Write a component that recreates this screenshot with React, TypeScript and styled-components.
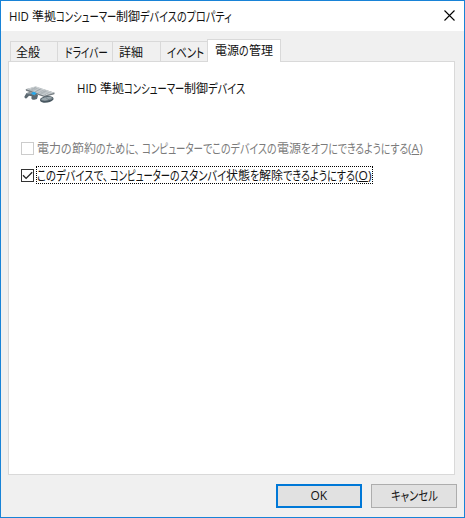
import React, { useLayoutEffect, useRef, useState } from "react";
import styled, { createGlobalStyle, css } from "styled-components";

const GlobalStyle = createGlobalStyle`
  * { box-sizing: border-box; }
  body { margin: 0; background: #f0f0f0; }
`;

const Window = styled.div`
  width: 465px;
  height: 518px;
  display: flex;
  flex-direction: column;
  border: 1px solid #1883d7;
  background: #f0f0f0;
  color: #111;
  font: 12px/16px "Noto Sans CJK JP", sans-serif;
  overflow: hidden;
`;

const TitleBar = styled.header`
  display: flex;
  align-items: flex-start;
  justify-content: space-between;
  height: 30px;
  flex: none;
  padding: 7px 9px 0 8px;
  background: #fff;
`;

const CloseButton = styled.button`
  display: flex;
  padding: 0;
  margin-top: 2px;
  border: 0;
  background: none;
`;

const Tabs = styled.nav`
  display: flex;
  align-items: flex-end;
  height: 30px;
  flex: none;
  padding-left: 9px;
`;

const Tab = styled.div<{ $width: number; $selected?: boolean; $first?: boolean; $inset: number }>`
  width: ${(p) => p.$width}px;
  height: 20px;
  padding: 2px 0 0 ${(p) => p.$inset}px;
  border-top: 1px solid #d9d9d9;
  border-left: ${(p) => (p.$first ? "1px solid #d9d9d9" : "0")};
  border-right: 1px solid #d9d9d9;
  ${(p) =>
    p.$selected &&
    css`
      height: 23px;
      margin: 0 0 -1px -1px;
      border-left: 1px solid #d9d9d9;
      background: #fff;
      position: relative;
    `}
`;

const Page = styled.main`
  width: 447px;
  height: 414px;
  flex: none;
  margin: 0 0 0 7px;
  padding: 17px 12px;
  border: 1px solid #d9d9d9;
  background: #fff;
`;

const Device = styled.div`
  display: flex;
  height: 60px;
  padding-left: 3px;
  gap: 21px;
`;

const DeviceName = styled.div`
  padding-top: 1px;
`;

const Option = styled.label<{ $disabled?: boolean }>`
  display: flex;
  align-items: center;
  height: 18px;
  margin-bottom: 9px;
  gap: 2px;
  color: ${(p) => (p.$disabled ? "#7b7b7b" : "#111")};
`;

const Box = styled.span<{ $disabled?: boolean }>`
  display: flex;
  width: 13px;
  height: 13px;
  flex: none;
  border: 1px solid ${(p) => (p.$disabled ? "#ccc" : "#333")};
`;

const OptionText = styled.span<{ $focused?: boolean }>`
  height: 18px;
  padding: 0 1px 0 0;
  border: 1px dotted ${(p) => (p.$focused ? "#000" : "transparent")};
`;

const Footer = styled.footer`
  display: flex;
  justify-content: flex-end;
  gap: 9px;
  padding: 9px 7px 0 0;
`;

const Button = styled.button<{ $primary?: boolean }>`
  display: flex;
  align-items: center;
  justify-content: center;
  width: 86px;
  height: 24px;
  padding: 0 0 2px;
  border: ${(p) => (p.$primary ? "2px solid #0078d7" : "1px solid #adadad")};
  background: #e1e1e1;
  color: #111;
  font: inherit;
`;

const Line = styled.span`
  display: flex;
  height: 16px;
  white-space: pre;
`;

const Slot = styled.span<{ $width: number; $gap: number }>`
  display: block;
  flex: none;
  width: ${(p) => p.$width}px;
  height: 16px;
  margin-right: ${(p) => p.$gap}px;
`;

type Script = "latin" | "kana" | "kanji";

const Glyphs = styled.span<{ $script: Script }>`
  display: block;
  width: max-content;
  transform-origin: 0 50%;
  ${(p) =>
    p.$script === "kana" &&
    css`
      font-size: 13px;
      font-feature-settings: "palt" 1;
    `}
  ${(p) =>
    p.$script === "latin" &&
    css`
      padding-top: 1px;
      font-family: "Open Sans", sans-serif;
    `}
`;

const Mnemonic = styled.span`
  text-decoration: underline;
  text-underline-offset: 1px;
  text-decoration-thickness: 1px;
`;

type Segment = [text: string, width: number, gap?: number];

function scriptOf(text: string): Script {
  if (/^[\x00-\x7f]+$/.test(text)) return "latin";
  return /^[\u3001-\u30ff]+$/.test(text) ? "kana" : "kanji";
}

/* A stretch of text condensed to the given advance width. */
function Run({ text, width, gap = 0 }: { text: string; width: number; gap?: number }) {
  const ref = useRef<HTMLSpanElement>(null);
  const [scale, setScale] = useState(1);
  useLayoutEffect(() => {
    if (ref.current) setScale(width / ref.current.offsetWidth);
  }, [text, width]);
  const key = /^\((.)\)$/.exec(text);
  return (
    <Slot $width={width} $gap={gap}>
      <Glyphs ref={ref} $script={scriptOf(text)} style={{ transform: `scaleX(${scale})` }}>
        {key ? <>(<Mnemonic>{key[1]}</Mnemonic>)</> : text}
      </Glyphs>
    </Slot>
  );
}

function Text({ runs }: { runs: Segment[] }) {
  return (
    <Line>
      {runs.map(([text, width, gap], i) => (
        <Run key={i} text={text} width={width} gap={gap} />
      ))}
    </Line>
  );
}

const tabs: { runs: Segment[]; width: number; inset: number; selected?: boolean }[] = [
  { runs: [["全般", 24]], width: 48, inset: 5 },
  { runs: [["ドライバー", 43]], width: 55, inset: 7 },
  { runs: [["詳細", 24]], width: 48, inset: 6 },
  { runs: [["イベント", 37]], width: 47, inset: 6 },
  { runs: [["電源", 24], ["の", 10], ["管理", 24]], width: 74, inset: 7, selected: true },
];

const deviceName: Segment[] = [
  ["HID", 20, 3],
  ["準拠", 24],
  ["コンシューマー", 60],
  ["制御", 24],
  ["デバイス", 37],
];

function DeviceIcon() {
  return (
    <svg width="32" height="32" viewBox="27 24 96 96">
      <path d="M32 55 62 47 119 65 118 70 88 78 33 59Z" fill="#777e83" />
      <path d="M33 54 62 46 118 65 88 74Z" fill="#ced3d5" />
      <path d="M41 55 93 71M49 52 101 69M57 50 109 67M47 58 64 49M61 62 78 53M76 67 94 58" stroke="#939ba0" strokeWidth="1.5" fill="none" />
      <path d="M34 67Q43 62 50 65L66 70Q71 73 68 77L66 84 58 86Q51 88 49 82L50 76 42 74 35 82Q29 84 28 77Z" fill="#5c6971" />
      <path d="M36 68 49 68 61 72" stroke="#aab4ba" strokeWidth="2" fill="none" />
      <path d="M48 67 56 62 65 67 57 73Z" fill="#27a9ed" />
      <path d="M77 82Q90 73 106 76 118 79 115 86 106 96 86 95 75 94 75 87Z" fill="#485760" />
      <path d="M79 83Q93 75 107 78 116 81 110 85 95 91 79 88Z" fill="#9ba7ad" />
      <path d="M91 77 99 86M99 86 113 82" stroke="#68747b" strokeWidth="2" />
    </svg>
  );
}

export default function App() {
  return (
    <>
      <GlobalStyle />
      <Window>
        <TitleBar>
          <Text runs={[...deviceName.slice(0, 4), ["デバイスのプロパティ", 92]]} />
          <CloseButton aria-label="閉じる">
            <svg width="11" height="11" viewBox="0 0 11 11">
              <path d="M.5.5l10 10M10.5.5l-10 10" stroke="#000" strokeWidth="1.1" />
            </svg>
          </CloseButton>
        </TitleBar>
        <Tabs>
          {tabs.map((t, i) => (
            <Tab key={i} $width={t.width} $inset={t.inset} $selected={t.selected} $first={i === 0}>
              <Text runs={t.runs} />
            </Tab>
          ))}
        </Tabs>
        <Page>
          <Device>
            <DeviceIcon />
            <DeviceName>
              <Text runs={deviceName} />
            </DeviceName>
          </Device>
          <Option $disabled>
            <Box $disabled />
            <OptionText>
              <Text
                runs={[
                  ["電力", 24],
                  ["の", 11],
                  ["節約", 24],
                  ["のために、", 44, 2],
                  ["コンピューター", 61],
                  ["でこのデバイスの", 74],
                  ["電源", 24],
                  ["を", 10],
                  ["オフにできるようにする", 97],
                  ["(A)", 15],
                ]}
              />
            </OptionText>
          </Option>
          <Option>
            <Box>
              <svg width="11" height="11" viewBox="0 0 11 11">
                <path d="M1 5.3 4.1 8.4 10.2 2.2" fill="none" stroke="#222" strokeWidth="1.3" />
              </svg>
            </Box>
            <OptionText $focused>
              <Text
                runs={[
                  ["このデバイスで、", 71, 2],
                  ["コンピューター", 60],
                  ["の", 10],
                  ["スタンバイ", 46],
                  ["状態", 24],
                  ["を", 9],
                  ["解除", 24],
                  ["できるようにする", 72],
                  ["(O)", 16],
                ]}
              />
            </OptionText>
          </Option>
        </Page>
        <Footer>
          <Button $primary>
            <Text runs={[["OK", 17]]} />
          </Button>
          <Button>
            <Text runs={[["キャンセル", 47]]} />
          </Button>
        </Footer>
      </Window>
    </>
  );
}
